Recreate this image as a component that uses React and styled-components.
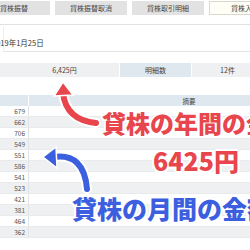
import React from "react";
import styled, { createGlobalStyle } from "styled-components";

const GlobalStyle = createGlobalStyle`
  html, body {
    margin: 0;
    padding: 0;
    background: #ffffff;
  }
  body {
    font-family: "Noto Sans CJK JP", "Noto Sans", sans-serif;
  }
`;

const tabs = [
  { label: "貸株振替" },
  { label: "貸株振替取消" },
  { label: "貸株取引明細" },
  { label: "貸株入金", active: true },
];

const rows = [679, 662, 706, 549, 551, 586, 541, 523, 421, 381, 464, 362];

export default function App() {
  return (
    <Page>
      <GlobalStyle />
      <TabBar>
        {tabs.map((t) => (
          <Tab key={t.label} $active={t.active}>
            {t.label}
          </Tab>
        ))}
      </TabBar>
      <DateBox>
        <DateText>2019年1月25日</DateText>
      </DateBox>
      <Summary>
        <SumCell $indent>6,425円</SumCell>
        <SumCell $label>明細数</SumCell>
        <SumCell>12件</SumCell>
      </Summary>
      <Table>
        <HeadRow>
          <HeadCell />
          <HeadCell>摘要</HeadCell>
        </HeadRow>
        {rows.map((v, i) => (
          <Row key={i} $odd={i % 2 === 1}>
            <NumCell>{v}</NumCell>
            <TextCell />
          </Row>
        ))}
      </Table>

      <Arrows width="250" height="250" viewBox="0 0 250 250">
        <path
          d="M96 123 Q66 120 63 93"
          fill="none"
          stroke="#ffffff"
          strokeWidth="10"
          strokeLinecap="round"
        />
        <path
          d="M96 123 Q66 120 63 93"
          fill="none"
          stroke="#e8454d"
          strokeWidth="6"
          strokeLinecap="round"
        />
        <polygon points="63,82 54,96 73,95" fill="#e8454d" stroke="#fff" strokeWidth="1.5" />

        <path
          d="M54 157 Q84 153 87 189"
          fill="none"
          stroke="#ffffff"
          strokeWidth="10"
          strokeLinecap="round"
        />
        <path
          d="M54 157 Q84 153 87 189"
          fill="none"
          stroke="#3c5fe0"
          strokeWidth="6"
          strokeLinecap="round"
        />
        <polygon points="43,157 56,147 57,168" fill="#3c5fe0" stroke="#fff" strokeWidth="1.5" />
      </Arrows>

      <Callout $color="#e8454d" $top={110} $left={102} $size={24}>
        貸株の年間の金額
      </Callout>
      <Callout $color="#e8454d" $top={147} $left={153} $size={25}>
        6425円
      </Callout>
      <Callout $color="#3c5fe0" $top={195} $left={72} $size={25}>
        貸株の月間の金額
      </Callout>
    </Page>
  );
}

const Page = styled.div`
  position: relative;
  width: 250px;
  height: 250px;
  overflow: hidden;
  background: #ffffff;
  color: #444;
`;

const TabBar = styled.div`
  display: flex;
  gap: 5px;
  margin-left: -22px;
  padding-top: 1px;
  height: 14px;
  border-bottom: 1px solid #e2e2e2;
  padding-bottom: 9px;
`;

const Tab = styled.div`
  flex: 0 0 72px;
  height: 14px;
  box-sizing: border-box;
  display: flex;
  align-items: center;
  justify-content: center;
  font-size: 7px;
  color: #444;
  background: ${(p) => (p.$active ? "#fffef6" : "#e2e2e2")};
  border: 1px solid ${(p) => (p.$active ? "#d8d8cc" : "#e2e2e2")};
`;

const DateBox = styled.div`
  margin-top: 2px;
  height: 21px;
  display: flex;
  align-items: flex-end;
  padding-bottom: 3px;
  border-bottom: 1px solid #e4e4e4;
  border-left: 1px solid #eee;
  margin-left: 3px;
`;

const DateText = styled.div`
  font-size: 7.5px;
  color: #333;
  margin-left: -12px;
  line-height: 10px;
`;

const Summary = styled.div`
  margin-top: 11px;
  display: grid;
  grid-template-columns: 120px 72px 72px;
  height: 14px;
`;

const SumCell = styled.div`
  display: flex;
  align-items: center;
  justify-content: center;
  padding-left: ${(p) => (p.$indent ? "10px" : "0")};
  font-size: 7px;
  color: #444;
  background: ${(p) => (p.$label ? "#dfe7ef" : "#eff0f1")};
  border-right: 1px solid #fff;
`;

const Table = styled.div`
  margin-top: 18px;
  width: 350px;
  display: flex;
  flex-direction: column;
`;

const HeadRow = styled.div`
  display: grid;
  grid-template-columns: 29px 1fr;
  height: 11px;
  background: #dfe7ef;
`;

const HeadCell = styled.div`
  display: flex;
  align-items: center;
  justify-content: center;
  font-size: 6.5px;
  color: #444;
  border-right: 1px solid #ffffff;
`;

const Row = styled.div`
  display: grid;
  grid-template-columns: 29px 1fr;
  height: 11px;
  background: ${(p) => (p.$odd ? "#eef0f2" : "#ffffff")};
  border-bottom: 1px solid #e8eaec;
  box-sizing: border-box;
`;

const NumCell = styled.div`
  display: flex;
  align-items: center;
  justify-content: flex-end;
  padding-right: 3px;
  font-size: 6.5px;
  color: #555;
  border-right: 1px solid #e0e3e6;
`;

const TextCell = styled.div``;

const Arrows = styled.svg`
  position: absolute;
  left: 0;
  top: 0;
  pointer-events: none;
`;

const Callout = styled.div`
  position: absolute;
  top: ${(p) => p.$top}px;
  left: ${(p) => p.$left}px;
  font-size: ${(p) => p.$size}px;
  line-height: 1.1;
  font-weight: 900;
  white-space: nowrap;
  color: ${(p) => p.$color};
  text-shadow: 2px 0 0 #fff, -2px 0 0 #fff, 0 2px 0 #fff, 0 -2px 0 #fff,
    1.5px 1.5px 0 #fff, -1.5px 1.5px 0 #fff, 1.5px -1.5px 0 #fff,
    -1.5px -1.5px 0 #fff;
`;
